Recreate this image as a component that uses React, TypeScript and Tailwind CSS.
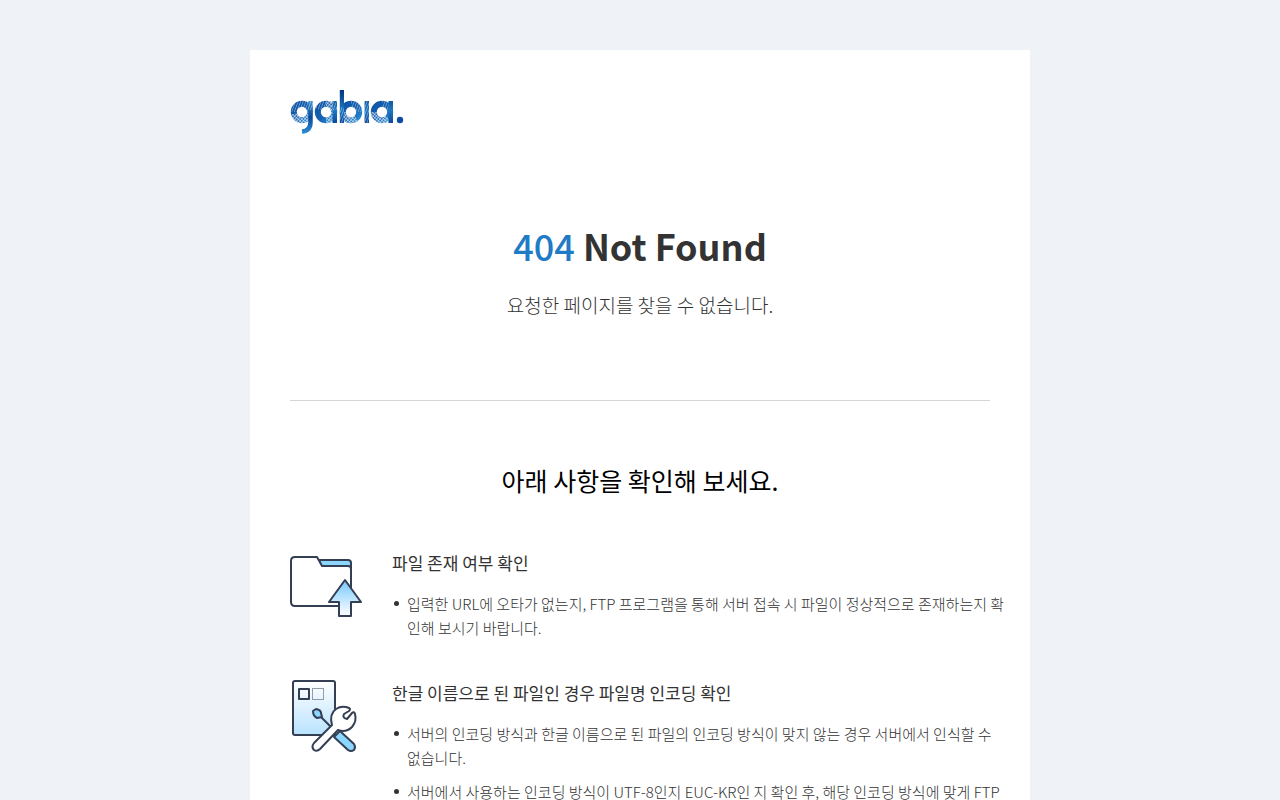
import React from 'react'

const guides = [
  {
    title: '파일 존재 여부 확인',
    icon: <FolderIcon />,
    items: ['입력한 URL에 오타가 없는지, FTP 프로그램을 통해 서버 접속 시 파일이 정상적으로 존재하는지 확인해 보시기 바랍니다.'],
  },
  {
    title: '한글 이름으로 된 파일인 경우 파일명 인코딩 확인',
    icon: <EncodingIcon />,
    items: [
      '서버의 인코딩 방식과 한글 이름으로 된 파일의 인코딩 방식이 맞지 않는 경우 서버에서 인식할 수 없습니다.',
      '서버에서 사용하는 인코딩 방식이 UTF-8인지 EUC-KR인 지 확인 후, 해당 인코딩 방식에 맞게 FTP 프로그램의 설정을 변경해 주세요.',
    ],
  },
]

function Logo() {
  return (
    <svg width="114" height="45" viewBox="290 90 114 45" role="img" aria-label="gabia">
      <defs>
        <linearGradient id="blue" x1="0" y1="0" x2="1" y2="1">
          <stop offset="0" stopColor="#0f55a6" />
          <stop offset="0.5" stopColor="#1560b0" />
          <stop offset="1" stopColor="#2a8bd0" />
        </linearGradient>
        <linearGradient id="hook" gradientUnits="userSpaceOnUse" x1="0" y1="101" x2="0" y2="134">
          <stop offset="0" stopColor="#3b93d2" />
          <stop offset="0.5" stopColor="#0b469b" />
          <stop offset="1" stopColor="#2f92d6" />
        </linearGradient>
        <linearGradient id="stem" gradientUnits="userSpaceOnUse" x1="0" y1="90" x2="0" y2="124">
          <stop offset="0" stopColor="#05367f" />
          <stop offset="0.6" stopColor="#1f78c2" />
          <stop offset="1" stopColor="#0a4496" />
        </linearGradient>
        <pattern id="hatch" width="2.400" height="2.400" patternUnits="userSpaceOnUse" patternTransform="rotate(40)">
          <path d="M0 0.500H2.400M0.500 0V2.400" stroke="#fff" strokeWidth="0.600" strokeOpacity="0.85" />
        </pattern>
        <pattern id="stripe" width="2.400" height="2" patternUnits="userSpaceOnUse" patternTransform="rotate(20)">
          <rect width="0.800" height="2" fill="#fff" fillOpacity="0.4" />
        </pattern>
      </defs>
      <g fill="none" stroke="url(#blue)" strokeWidth="6">
        <circle cx="302" cy="112" r="8.200" />
        <circle cx="326" cy="112" r="8.200" />
        <circle cx="351" cy="112" r="8.200" />
        <circle cx="382" cy="112" r="8.200" />
      </g>
      <g fill="none" stroke="url(#hatch)" strokeWidth="6.800">
        <path d="M294 114A8 8 0 0 0 310 112" />
        <path d="M326 104A8 8 0 0 1 334 112M326 120A8 8 0 0 0 334 112" />
        <path d="M343 112A8 8 0 0 0 356 118" />
        <path d="M374 112A8 8 0 0 0 388 118" />
      </g>
      <g fill="none" stroke="url(#stripe)" strokeWidth="6.800">
        <path d="M294 112A8 8 0 0 1 310 112" />
        <path d="M318 109A8 8 0 0 1 326 104" />
        <path d="M351 104A8 8 0 0 1 359 112" />
        <path d="M382 104A8 8 0 0 1 390 112" />
      </g>
      <path d="M310.500 101V122Q310.500 131 302 131.500" fill="none" stroke="url(#hook)" strokeWidth="4.500" />
      <g fill="url(#stem)">
        <rect x="332.500" y="101" width="4.500" height="22" />
        <rect x="339.800" y="90" width="4.200" height="33" />
        <rect x="364.500" y="101" width="4.500" height="22" />
        <rect x="388.500" y="101" width="4.500" height="22" />
      </g>
      <g fill="url(#stripe)">
        <rect x="332" y="101" width="5" height="9" />
        <rect x="340" y="107" width="4" height="16" />
        <rect x="364" y="101" width="5" height="22" />
        <rect x="308" y="101" width="5" height="9" />
      </g>
      <circle cx="400" cy="120" r="3.200" fill="#0d4da0" />
    </svg>
  )
}

function FolderIcon() {
  return (
    <svg width="72" height="68" viewBox="290 550 72 68" fill="none" stroke="#343f54" strokeWidth="2" strokeLinejoin="round" aria-hidden="true">
      <defs>
        <linearGradient id="arrow" x1="0" y1="0" x2="0" y2="1">
          <stop offset="0" stopColor="#74c8fd" />
          <stop offset="1" stopColor="#fff" />
        </linearGradient>
      </defs>
      <path d="M319 560H348Q351 560 351 563V568H322Z" fill="#8bd7ff" />
      <path d="M295 557H317L322 566H348Q351 566 351 569V606H295Q291 606 291 602V561Q291 557 295 557Z" fill="#fff" />
      <path d="M345 580L361 602H351V616H339V602H329Z" fill="url(#arrow)" />
    </svg>
  )
}

function EncodingIcon() {
  return (
    <svg width="72" height="74" viewBox="290 680 72 74" fill="none" stroke="#343f54" strokeWidth="2" strokeLinejoin="round" aria-hidden="true">
      <defs>
        <linearGradient id="sheet" x1="0" y1="0" x2="0" y2="1">
          <stop offset="0" stopColor="#fff" />
          <stop offset="1" stopColor="#b9e3ff" />
        </linearGradient>
      </defs>
      <rect x="293" y="681" width="42" height="54" rx="2" fill="url(#sheet)" />
      <rect x="299" y="689" width="10" height="10" />
      <rect x="312.500" y="688.500" width="11" height="11" strokeWidth="1" strokeDasharray="1 1" />
      <path d="M313 711L316 709Q321 710 321 713L322 717L317 718Q313 716 313 711Z" fill="#8bd7ff" />
      <path d="M321 717L331 727" />
      <path d="M334 737L340 731L354 744Q356 747 354 750Q351 752 348 750Z" fill="#8bd7ff" />
      <path d="M314 743L332 725Q329 714 336 709Q342 705 349 708Q351 709 349 711L344 714Q342 718 347 719L352 713Q354 711 355 714Q357 721 352 727Q346 733 338 730L320 749Q317 752 314 750Q311 747 314 743Z" fill="#fff" />
    </svg>
  )
}

export default function App() {
  return (
    <div className="min-h-screen bg-[#eff3f8] px-4 py-[50px] font-['Noto_Sans_CJK_KR',sans-serif] text-[#333]">
      <main className="mx-auto max-w-[780px] bg-white p-10">
        <header>
          <a href="/" className="block w-fit"><Logo /></a>
        </header>

        <section className="border-b border-[#d6d6d6] pt-[82px] pb-[81px] text-center">
          <h1 className="text-[36px] leading-[56px] font-bold"><span className="font-medium text-[#1f7bc3]">404</span> Not Found</h1>
          <p className="mt-[18px] text-[19px] leading-[28px] font-light">요청한 페이지를 찾을 수 없습니다.</p>
        </section>

        <section className="pt-[59px]">
          <h2 className="text-center text-[25px] leading-[40px] text-black">아래 사항을 확인해 보세요.</h2>
          <div className="mt-[50px] space-y-10">
            {guides.map((guide) => (
              <article key={guide.title} className="flex gap-[30px]">
                <div className="w-[72px] shrink-0">{guide.icon}</div>
                <div className="-mr-4 min-w-0 flex-1">
                  <h3 className="text-[17px] leading-[26px]">{guide.title}</h3>
                  <ul className="mt-4 space-y-[10px] text-[15px] leading-6 font-light break-all">
                    {guide.items.map((item) => (
                      <li key={item} className="flex gap-2">
                        <span className="mt-[9px] ml-[2px] size-[5px] shrink-0 rounded-full bg-[#333]" />
                        <span>{item}</span>
                      </li>
                    ))}
                  </ul>
                </div>
              </article>
            ))}
          </div>
        </section>
      </main>
    </div>
  )
}
